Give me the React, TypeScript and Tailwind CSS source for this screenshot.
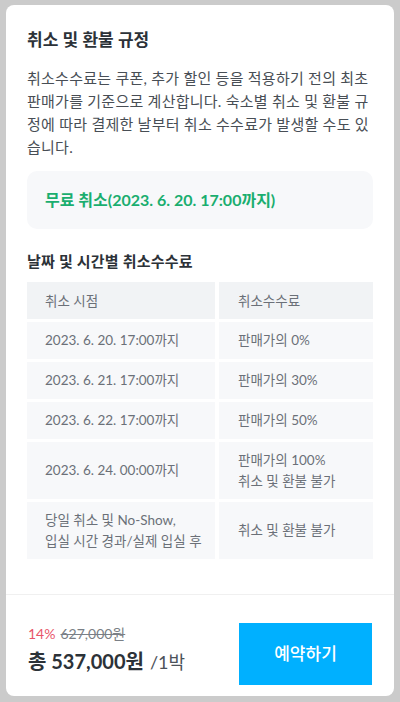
import React from "react";

const rows = [
	{ when: ["2023. 6. 20. 17:00까지"], fee: ["판매가의 0%"] },
	{ when: ["2023. 6. 21. 17:00까지"], fee: ["판매가의 30%"] },
	{ when: ["2023. 6. 22. 17:00까지"], fee: ["판매가의 50%"] },
	{ when: ["2023. 6. 24. 00:00까지"], fee: ["판매가의 100%", "취소 및 환불 불가"] },
	{ when: ["당일 취소 및 No-Show,", "입실 시간 경과/실제 입실 후"], fee: ["취소 및 환불 불가"] },
];

export default function App() {
	return (
		<div
			className="w-[400px] h-[702px] bg-[#cbcbcb] pt-[5px] px-[6px] pb-[6px]"
			style={{ fontFamily: 'Lato, "Noto Sans CJK KR", sans-serif' }}>
			<div className="h-full bg-white rounded-[8px] flex flex-col overflow-hidden">
				{/* 본문 */}
				<div className="flex-1 px-[21px] pt-[22px]">
					<h2 className="text-[17px] leading-[26px] font-semibold text-[#2c3238]">취소 및 환불 규정</h2>
					<p className="mt-[14px] text-[15px] leading-[23px] text-[#484e55] tracking-[0.25px]">
						취소수수료는 쿠폰, 추가 할인 등을 적용하기 전의 최초 판매가를 기준으로 계산합니다. 숙소별 취소 및 환불 규정에 따라 결제한 날부터 취소 수수료가 발생할 수도 있습니다.
					</p>

					<div className="mt-[12px] h-[58px] rounded-[10px] bg-[#f7f8fa] flex items-center px-[18px]">
						<span className="text-[16px] font-bold text-[#1aae6f]">무료 취소(2023. 6. 20. 17:00까지)</span>
					</div>

					<h3 className="mt-[21px] text-[15px] leading-[22px] font-semibold text-[#2c3238] tracking-[0.2px]">날짜 및 시간별 취소수수료</h3>

					<div className="mt-[10px] grid grid-cols-[188px_1fr] gap-x-[4px] gap-y-[3px] text-[13.5px] leading-[20px] text-[#6b7078]">
						<div className="h-[37px] bg-[#f1f3f5] flex items-center pl-[18px]">취소 시점</div>
						<div className="h-[37px] bg-[#f1f3f5] flex items-center pl-[19px]">취소수수료</div>
						{rows.map((r, i) => (
							<React.Fragment key={i}>
								<div className={`${r.when.length + r.fee.length > 2 ? "h-[57px]" : "h-[37px]"} bg-[#f7f8fa] flex flex-col justify-center pl-[18px]`}>
									{r.when.map((t) => (
										<span key={t} className="leading-[21px]">{t}</span>
									))}
								</div>
								<div className={`${r.when.length + r.fee.length > 2 ? "h-[57px]" : "h-[37px]"} bg-[#f7f8fa] flex flex-col justify-center pl-[19px]`}>
									{r.fee.map((t) => (
										<span key={t} className="leading-[21px]">{t}</span>
									))}
								</div>
							</React.Fragment>
						))}
					</div>
				</div>

				{/* 하단 결제 바 */}
				<div className="border-t border-[#f0f0f0] h-[102px] flex items-start justify-between pl-[22px] pr-[22px] pt-[28px]">
					<div className="pt-[2px]">
						<div className="flex items-center gap-[5px] text-[14px] leading-[18px]">
							<span className="text-[#e8546a]">14%</span>
							<span className="text-[#7a7f86] line-through">627,000원</span>
						</div>
						<div className="mt-[4px] flex items-baseline">
							<span className="text-[20px] leading-[28px] font-bold text-[#2c3238]">총 537,000원</span>
							<span className="ml-[6px] text-[18px] text-[#4c525a]">/1박</span>
						</div>
					</div>
					<button className="w-[133px] h-[62px] bg-[#00b0ff] text-white text-[17px] font-medium">예약하기</button>
				</div>
			</div>
		</div>
	);
}
